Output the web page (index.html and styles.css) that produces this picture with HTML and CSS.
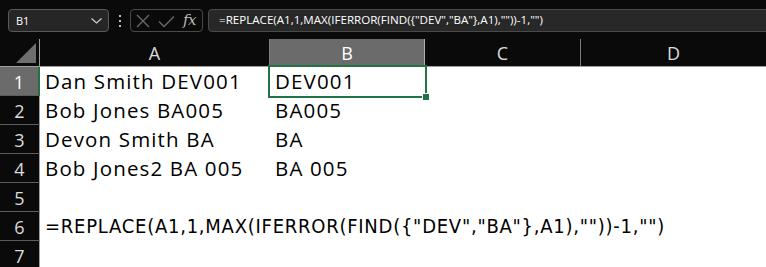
FILE: index.html
```html
<!DOCTYPE html>
<html>
<head>
<meta charset="utf-8">
<link rel="stylesheet" href="styles.css">
</head>
<body>
<div class="app">
  <div class="topbar">
    <div class="namebox">
      <span class="nb-text">B1</span>
      <svg class="chev" width="11" height="6" viewBox="0 0 11 6"><path d="M0.5 0.5 L5.5 5 L10.5 0.5" fill="none" stroke="#cfcfcf" stroke-width="1.2"/></svg>
    </div>
    <div class="dots"><i></i><i></i><i></i></div>
    <div class="fxbox">
      <svg width="73" height="23" viewBox="0 0 73 23">
        <path d="M7 6 L19 18 M19 6 L7 18" stroke="#6a6a6a" stroke-width="1.3" fill="none"/>
        <path d="M29 12.5 L34 17.5 L44 7.5" stroke="#6a6a6a" stroke-width="1.3" fill="none"/>
      </svg>
      <span class="fx">fx</span>
    </div>
    <div class="formula">=REPLACE(A1,1,MAX(IFERROR(FIND({"DEV","BA"},A1),""))-1,"")</div>
  </div>
  <div class="sheet">
    <div class="corner"><span class="tri"></span></div>
    <div class="ch">A</div>
    <div class="ch ch-sel">B</div>
    <div class="ch">C</div>
    <div class="ch ch-last">D</div>

    <div class="rh rh-sel">1</div>
    <div class="cell">Dan Smith DEV001</div>
    <div class="cell active">DEV001<span class="handle"></span></div>
    <div class="cell"></div>
    <div class="cell"></div>

    <div class="rh">2</div>
    <div class="cell">Bob Jones BA005</div>
    <div class="cell">BA005</div>
    <div class="cell"></div>
    <div class="cell"></div>

    <div class="rh">3</div>
    <div class="cell">Devon Smith BA</div>
    <div class="cell">BA</div>
    <div class="cell"></div>
    <div class="cell"></div>

    <div class="rh">4</div>
    <div class="cell">Bob Jones2 BA 005</div>
    <div class="cell">BA 005</div>
    <div class="cell"></div>
    <div class="cell"></div>

    <div class="rh">5</div>
    <div class="cell"></div>
    <div class="cell"></div>
    <div class="cell"></div>
    <div class="cell"></div>

    <div class="rh">6</div>
    <div class="cell narrow">=REPLACE(A1,1,MAX(IFERROR(FIND({"DEV","BA"},A1),""))-1,"")</div>
    <div class="cell"></div>
    <div class="cell"></div>
    <div class="cell"></div>

    <div class="rh">7</div>
    <div class="cell"></div>
    <div class="cell"></div>
    <div class="cell"></div>
    <div class="cell"></div>
  </div>
</div>
</body>
</html>
```
FILE: styles.css
```css
html, body {
  margin: 0;
  padding: 0;
  background: #0a0a0a;
  overflow: hidden;
}
.app {
  width: 766px;
  height: 267px;
  overflow: hidden;
}
.topbar {
  height: 39px;
  box-sizing: border-box;
  padding: 9px 0 0 8px;
  display: flex;
  align-items: flex-start;
  background: #0a0a0a;
  font-family: "Open Sans", "Noto Sans", sans-serif;
}
.namebox {
  width: 101px;
  height: 23px;
  box-sizing: border-box;
  border: 1px solid #5a5a5a;
  border-radius: 4px;
  background: #262626;
  display: flex;
  align-items: center;
  justify-content: space-between;
  padding: 0 6px 0 7px;
  color: #ffffff;
  font-size: 11px;
}
.nb-text { margin-top: -1px; }
.chev { display: block; margin-top: 1px; }
.dots {
  width: 21px;
  height: 23px;
  display: flex;
  flex-direction: column;
  align-items: center;
  justify-content: center;
  gap: 3px;
}
.dots i {
  display: block;
  width: 2px;
  height: 2px;
  background: #bdbdbd;
}
.fxbox {
  width: 73px;
  height: 23px;
  box-sizing: border-box;
  border: 1px solid #4a4a4a;
  border-radius: 4px;
  position: relative;
  display: flex;
}
.fxbox svg {
  position: absolute;
  left: -1px;
  top: -1px;
}
.fx {
  position: absolute;
  left: 52px;
  top: 1px;
  font-family: "DejaVu Serif", "Liberation Serif", serif;
  font-style: italic;
  font-size: 15px;
  color: #b8b8b8;
  letter-spacing: -0.5px;
}
.formula {
  flex: 1;
  margin-left: 5px;
  margin-right: -4px;
  height: 23px;
  box-sizing: border-box;
  border: 1px solid #4a4a4a;
  border-radius: 4px;
  background: #282828;
  color: #ffffff;
  font-size: 11.6px;
  line-height: 20px;
  padding-left: 10px;
  white-space: nowrap;
}
.sheet {
  display: grid;
  grid-template-columns: 40px 230px 155px 156px 1fr;
  grid-template-rows: 28px repeat(7, 29px);
  background: #ffffff;
}
.corner {
  background: #0a0a0a;
  border-right: 1px solid #9e9e9e;
  border-bottom: 1px solid #9e9e9e;
  box-sizing: border-box;
  position: relative;
}
.tri {
  position: absolute;
  left: 16px;
  top: 4px;
  width: 0;
  height: 0;
  border-left: 20px solid transparent;
  border-bottom: 20px solid #6e6e6e;
}
.ch {
  background: #0a0a0a;
  color: #dcdcdc;
  border-right: 1px solid #7e7e7e;
  border-bottom: 1px solid #9e9e9e;
  box-sizing: border-box;
  font-family: "Open Sans", "Noto Sans", sans-serif;
  font-size: 18px;
  display: flex;
  align-items: center;
  justify-content: center;
  padding-top: 1px;
}
.ch-last { border-right: none; }
.ch-sel {
  background: #6b6b6b;
  color: #ffffff;
  border-right-color: #b0b0b0;
  border-bottom: 2px solid #217346;
}
.rh {
  background: #0a0a0a;
  color: #dcdcdc;
  border-right: 1px solid #9e9e9e;
  border-bottom: 1px solid #5c5c5c;
  box-sizing: border-box;
  font-family: "Open Sans", "Noto Sans", sans-serif;
  font-size: 18px;
  display: flex;
  align-items: center;
  justify-content: center;
  padding-top: 1px;
}
.rh-sel {
  background: #6b6b6b;
  color: #ffffff;
  border-right: 2px solid #217346;
}
.cell {
  position: relative;
  background: #ffffff;
  color: #000000;
  font-family: "Open Sans", "Noto Sans", sans-serif;
  font-size: 20.5px;
  letter-spacing: 1.15px;
  line-height: 29px;
  padding-left: 5px;
  white-space: nowrap;
  overflow: visible;
  box-sizing: border-box;
}
.narrow {
  font-family: "Liberation Sans Narrow", "DejaVu Sans Condensed", "Roboto", sans-serif;
  font-size: 20px;
  letter-spacing: 0.75px;
  z-index: 1;
}
.active {
  z-index: 2;
}
.active::before {
  content: "";
  position: absolute;
  left: -2px;
  top: -2px;
  right: -2px;
  bottom: -2px;
  border: 2px solid #217346;
  pointer-events: none;
}
.handle {
  position: absolute;
  right: -5px;
  bottom: -5px;
  width: 6px;
  height: 6px;
  background: #217346;
  border: 1px solid #ffffff;
}
```
